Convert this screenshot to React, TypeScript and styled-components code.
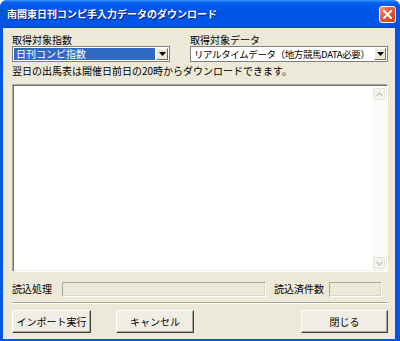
import React from 'react';
import styled, { createGlobalStyle } from 'styled-components';

const GlobalStyle = createGlobalStyle`
  html, body {
    margin: 0;
    padding: 0;
  }
  body {
    font-family: "Noto Sans CJK JP", "Noto Sans", sans-serif;
    font-size: 10px;
    color: #000;
  }
`;

const Window = styled.div`
  width: 400px;
  height: 341px;
  display: flex;
  flex-direction: column;
  background: #0055e5;
  border-radius: 7px 7px 0 0;
  overflow: hidden;
`;

const TitleBar = styled.div`
  flex: none;
  height: 28px;
  display: flex;
  align-items: center;
  justify-content: space-between;
  padding: 0 4px 0 7px;
  background: linear-gradient(
    to bottom,
    #3d95ff 0,
    #0a66f0 8%,
    #0058ee 20%,
    #0054e3 55%,
    #0055eb 85%,
    #0049d4 100%
  );
`;

const Title = styled.div`
  color: #fff;
  font-weight: 700;
  font-size: 10px;
  line-height: 12px;
  text-shadow: 1px 1px 0 #0a1e80;
`;

const CloseButton = styled.div`
  width: 17px;
  height: 17px;
  box-sizing: border-box;
  border: 1px solid #fff;
  border-radius: 3px;
  background: linear-gradient(135deg, #f29a7a 0%, #e45c34 45%, #cc4419 100%);
  display: flex;
  align-items: center;
  justify-content: center;
`;

const Body = styled.div`
  flex: 1;
  display: flex;
  flex-direction: column;
  margin: 0 5px 2px 3px;
  padding: 5px 7px 6px 9px;
  background: #ece9d8;
  min-height: 0;
`;

const SelectRow = styled.div`
  display: flex;
  gap: 20px;
`;

const Field = styled.div<{ $width?: number }>`
  display: flex;
  flex-direction: column;
  min-width: 0;
  ${p => (p.$width ? `width: ${p.$width}px; flex: none;` : 'flex: 1;')}
`;

const Label = styled.div`
  height: 13px;
  line-height: 13px;
  white-space: nowrap;
`;

const Combo = styled.div`
  height: 16px;
  box-sizing: border-box;
  border: 1px solid #7f7f7f;
  background: #fff;
  display: flex;
  align-items: stretch;
  padding: 1px;
`;

const ComboValue = styled.div<{ $selected?: boolean; $tight?: boolean }>`
  flex: 1;
  min-width: 0;
  padding: 0 2px;
  line-height: 12px;
  white-space: nowrap;
  margin-right: 1px;
  font-size: ${p => (p.$tight ? '9.5px' : '10px')};
  letter-spacing: ${p => (p.$tight ? '-0.4px' : '0')};
  background: ${p => (p.$selected ? '#316ac5' : 'transparent')};
  color: ${p => (p.$selected ? '#fff' : '#000')};
`;

const DropButton = styled.div`
  width: 12px;
  flex: none;
  box-sizing: border-box;
  background: #ece9d8;
  border-top: 1px solid #fff;
  border-left: 1px solid #fff;
  border-right: 1px solid #716f64;
  border-bottom: 1px solid #716f64;
  display: flex;
  align-items: center;
  justify-content: center;
`;

const Note = styled.div`
  margin-top: 2px;
  height: 13px;
  line-height: 13px;
  white-space: nowrap;
`;

const LogBox = styled.div`
  margin-top: 7px;
  flex: 1;
  min-height: 0;
  box-sizing: border-box;
  background: #fff;
  border-top: 1px solid #aca899;
  border-left: 1px solid #aca899;
  border-right: 1px solid #fff;
  border-bottom: 1px solid #fff;
  box-shadow: inset 1px 1px 0 #716f64, inset -1px -1px 0 #f1efe2;
  display: flex;
  justify-content: flex-end;
  padding: 3px 2px 2px 2px;
`;

const ScrollBar = styled.div`
  width: 12px;
  display: flex;
  flex-direction: column;
  justify-content: space-between;
  background: #fbfbf8;
`;

const ScrollArrow = styled.div`
  height: 12px;
  box-sizing: border-box;
  border: 1px solid #e6e4dc;
  border-radius: 2px;
  background: #f4f3ee;
  display: flex;
  align-items: center;
  justify-content: center;
`;

const StatusRow = styled.div`
  margin-top: 9px;
  height: 16px;
  display: flex;
  align-items: center;
`;

const StatusLabel = styled.div<{ $width: number; $indent?: number }>`
  width: ${p => p.$width}px;
  padding-left: ${p => p.$indent ?? 0}px;
  box-sizing: border-box;
  flex: none;
  white-space: nowrap;
  line-height: 14px;
`;

const StatusBox = styled.div<{ $width?: number }>`
  height: 15px;
  box-sizing: border-box;
  border-top: 1px solid #aca899;
  border-left: 1px solid #aca899;
  border-right: 1px solid #fff;
  border-bottom: 1px solid #fff;
  box-shadow: inset -1px -1px 0 #d8d5c8;
  background: #ece9d8;
  ${p => (p.$width ? `width: ${p.$width}px; flex: none;` : 'flex: 1;')}
`;

const Divider = styled.div`
  margin-top: 5px;
  height: 0;
  border-top: 1px solid #aca899;
  border-bottom: 1px solid #fff;
`;

const ButtonRow = styled.div`
  margin-top: 6px;
  height: 23px;
  display: flex;
`;

const Button = styled.div<{ $width: number; $gap?: number; $push?: boolean }>`
  width: ${p => p.$width}px;
  margin-right: ${p => p.$gap ?? 0}px;
  ${p => (p.$push ? 'margin-left: auto;' : '')}
  box-sizing: border-box;
  background: #f0eee4;
  border-top: 1px solid #fff;
  border-left: 1px solid #fff;
  border-right: 1px solid #404040;
  border-bottom: 1px solid #404040;
  box-shadow: inset -1px -1px 0 #aca899;
  display: flex;
  align-items: center;
  justify-content: center;
  white-space: nowrap;
`;

const Triangle = ({ color = '#000' }: { color?: string }) => (
  <svg width="7" height="4" viewBox="0 0 7 4">
    <path d="M0 0H7L3.5 4Z" fill={color} />
  </svg>
);

const Chevron = ({ up }: { up?: boolean }) => (
  <svg width="7" height="5" viewBox="0 0 7 5">
    <path
      d={up ? 'M0.5 4L3.5 1L6.5 4' : 'M0.5 1L3.5 4L6.5 1'}
      stroke="#c9c7ba"
      strokeWidth="1.4"
      fill="none"
    />
  </svg>
);

export default function App() {
  return (
    <>
      <GlobalStyle />
      <Window>
        <TitleBar>
          <Title>南関東日刊コンピ手入力データのダウンロード</Title>
          <CloseButton>
            <svg width="9" height="9" viewBox="0 0 9 9">
              <path d="M1 1L8 8M8 1L1 8" stroke="#fff" strokeWidth="2" strokeLinecap="square" />
            </svg>
          </CloseButton>
        </TitleBar>
        <Body>
          <SelectRow>
            <Field $width={158}>
              <Label>取得対象指数</Label>
              <Combo>
                <ComboValue $selected>日刊コンピ指数</ComboValue>
                <DropButton>
                  <Triangle />
                </DropButton>
              </Combo>
            </Field>
            <Field>
              <Label>取得対象データ</Label>
              <Combo>
                <ComboValue $tight>リアルタイムデータ（地方競馬DATA必要）</ComboValue>
                <DropButton>
                  <Triangle />
                </DropButton>
              </Combo>
            </Field>
          </SelectRow>
          <Note>翌日の出馬表は開催日前日の20時からダウンロードできます。</Note>
          <LogBox>
            <ScrollBar>
              <ScrollArrow>
                <Chevron up />
              </ScrollArrow>
              <ScrollArrow>
                <Chevron />
              </ScrollArrow>
            </ScrollBar>
          </LogBox>
          <StatusRow>
            <StatusLabel $width={50}>読込処理</StatusLabel>
            <StatusBox />
            <StatusLabel $width={63} $indent={8}>
              読込済件数
            </StatusLabel>
            <StatusBox $width={53} />
            <StatusLabel $width={6} />
          </StatusRow>
          <Divider />
          <ButtonRow>
            <Button $width={79} $gap={25}>インポート実行</Button>
            <Button $width={78}>キャンセル</Button>
            <Button $width={87} $push>閉じる</Button>
          </ButtonRow>
        </Body>
      </Window>
    </>
  );
}
